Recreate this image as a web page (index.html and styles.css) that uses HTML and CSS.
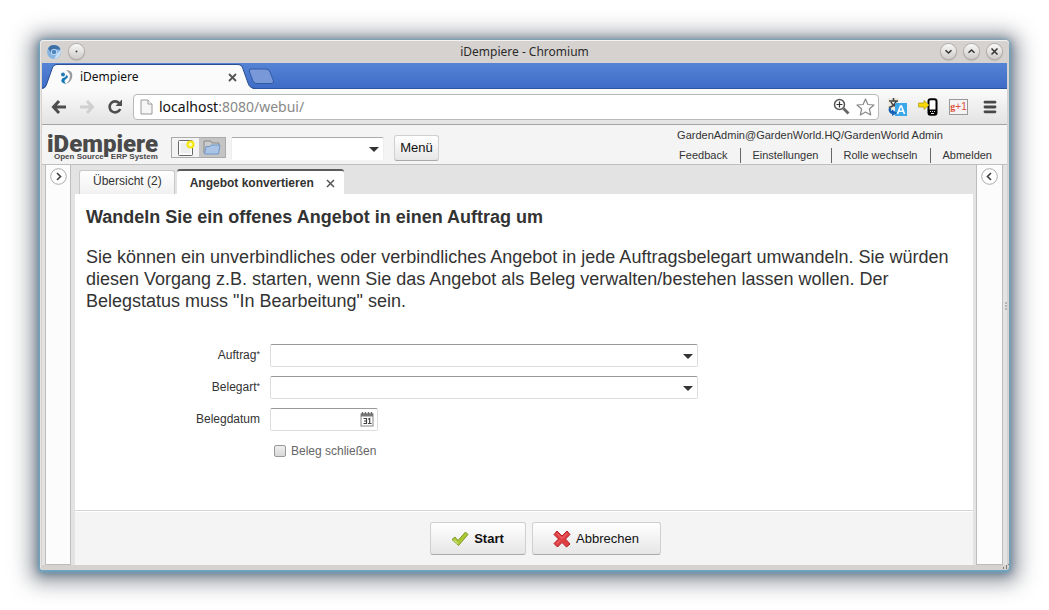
FILE: index.html
```html
<!DOCTYPE html>
<html lang="de">
<head>
<meta charset="utf-8">
<title>iDempiere</title>
<link rel="stylesheet" href="styles.css">
</head>
<body>
<div class="window">
  <div class="titlebar">
    <svg class="app-icon" width="14" height="14" viewBox="0 0 14 14"><circle cx="7" cy="7" r="7" fill="#86b4e2"/><path d="M1 3.500A7 7 0 0 1 13.500 4.500H7a3 3 0 0 0-3 3z" fill="#3e70a8"/><path d="M13.500 5A7 7 0 0 1 7 14l3-5.500z" fill="#c4def4"/><circle cx="7" cy="7" r="3" fill="#d4e6f7"/><circle cx="7" cy="7" r="2.300" fill="#4d86c0"/></svg>
    <button class="round" aria-label="Fenstermenü"><svg width="15" height="15" viewBox="0 0 15 15"><circle cx="7.500" cy="7.500" r="1" fill="#444"/></svg></button>
    <span class="window-title">iDempiere - Chromium</span>
    <button class="round" aria-label="Minimieren"><svg width="15" height="15" viewBox="0 0 15 15"><path d="M4.500 6.200l3 2.800 3-2.800" fill="none" stroke="#333" stroke-width="1.500"/></svg></button>
    <button class="round" aria-label="Maximieren"><svg width="15" height="15" viewBox="0 0 15 15"><path d="M4.500 8.800l3-2.800 3 2.800" fill="none" stroke="#333" stroke-width="1.500"/></svg></button>
    <button class="round" aria-label="Fenster schließen"><svg width="15" height="15" viewBox="0 0 15 15"><path d="M4.500 4.500l6 6M10.500 4.500l-6 6" stroke="#333" stroke-width="1.500"/></svg></button>
  </div>

  <div class="tabstrip">
    <div class="browser-tab">
      <svg class="tab-shape" width="214" height="26" viewBox="0 0 214 26"><path d="M0 26C3 25.500 4 24 5 21L10 6C11 3 12 2 15 2H196C199 2 200 3 201 6L206 20C207 23.500 209 25 212 26z" fill="#fbfbfb"/><path d="M0 25C3 24.500 4 23 5 20L10 6C11 3 12 1.500 15 1.500H196C199 1.500 200 3 201 6L206 20C207 23.500 209 25 213 25.500" fill="none" stroke="#2c4f93"/></svg>
      <svg class="favicon" width="14" height="16" viewBox="0 0 14 16"><path d="M6 1C12 1 13 5 12 9c-1 3-3 5-6 6 3-3 4-5 4-8S8 3 6 1z" fill="#9a9c9f"/><circle cx="3" cy="5.500" r="2" fill="#2479b5"/><path d="M6 6c3 1 2 3 0 4-2 1-2 3 0 5-5-1-6-4-3-6 2-1 3-1 3-3z" fill="#1677b6"/></svg>
      <span class="browser-tab-title">iDempiere</span>
      <button class="plain" aria-label="Tab schließen"><svg width="9" height="9" viewBox="0 0 9 9"><path d="M1 1l7 7M8 1L1 8" stroke="#555" stroke-width="1.800"/></svg></button>
    </div>
    <button class="plain new-tab" aria-label="Neuer Tab"><svg width="27" height="17" viewBox="0 0 27 17"><path d="M3 1H18Q21 1 22 4L25.500 13Q26 15.500 23 15.500H9Q6 15.500 5 13L1.500 4Q.5 1 3 1z" fill="#7898d8" stroke="#345ba8"/></svg></button>
  </div>

  <div class="toolbar">
    <button class="plain" aria-label="Zurück"><svg width="16" height="14" viewBox="0 0 16 14"><path d="M8 1L2.500 7 8 13M2.500 7H15" fill="none" stroke="#4d4d4d" stroke-width="3"/></svg></button>
    <button class="plain" aria-label="Vorwärts"><svg width="16" height="14" viewBox="0 0 16 14"><path d="M8 1l5.500 6L8 13M13.500 7H1" fill="none" stroke="#d0d0d0" stroke-width="3"/></svg></button>
    <button class="plain" aria-label="Neu laden"><svg width="16" height="16" viewBox="0 0 16 16"><path d="M12.500 4.500A5.500 5.500 0 1 0 13.200 10" fill="none" stroke="#4d4d4d" stroke-width="2.600"/><path d="M15 .5V7H8.500z" fill="#4d4d4d"/></svg></button>
    <div class="omnibox">
      <svg width="13" height="16" viewBox="0 0 13 16"><path d="M1 1H8L12 5V15H1z" fill="#f6f6f6" stroke="#999"/><path d="M8 1V5H12" fill="#fff" stroke="#999"/></svg>
      <span class="url" role="textbox" aria-label="Adresse"><b>localhost</b>:8080/webui/</span>
      <svg width="17" height="17" viewBox="0 0 17 17"><circle cx="6.500" cy="6.500" r="5" fill="#fff" stroke="#555" stroke-width="1.500"/><path d="M3.500 6.500h6M6.500 3.500v6" stroke="#333" stroke-width="1.200"/><path d="M10.500 10.500l5 5" stroke="#666" stroke-width="2.800"/></svg>
      <svg width="19" height="18" viewBox="0 0 19 18"><path d="M9.500 1l2.400 5.500 6.100.5-4.600 4 1.300 6-5.200-3.100L4.300 17l1.300-6L1 7l6.100-.5z" fill="#fff" stroke="#888" stroke-width="1.200" stroke-linejoin="round"/></svg>
    </div>
    <div class="extensions">
      <button class="plain" aria-label="Übersetzen"><svg width="19" height="18" viewBox="0 0 19 18"><path d="M0 0H11V11H0z" fill="#eeeade"/><path d="M1 3H10M5.500 0V3M8 3Q7 8 1 9.500M3 4Q5 8 10 9" fill="none" stroke="#444" stroke-width="1.600"/><rect x="7" y="5" width="12" height="13" fill="#3ba7e8"/><path d="M9.500 16l3-8h1l3 8M10.500 13.300h5" fill="none" stroke="#fff" stroke-width="1.600"/><path d="M2 10Q1 14 5 15" fill="none" stroke="#1763b5" stroke-width="2.500"/><path d="M4 11.500L9 15l-5 3z" fill="#1763b5"/></svg></button>
      <button class="plain" aria-label="An Telefon senden"><svg width="20" height="18" viewBox="0 0 20 18"><rect x="10.500" y="1.200" width="8" height="15.600" rx="2" fill="#fff" stroke="#000" stroke-width="2"/><path d="M10 11.500h9V16q0 1-1 1h-7q-1 0-1-1z"/><path d="M12 13.500h1M14 13.500h1M16 13.500h1M13 15.500h3" stroke="#ddd"/><path d="M.5 5H6V2.500L11 7 6 11.500V9H.5z" fill="#fbd900" stroke="#a99118" stroke-width=".7"/></svg></button>
      <button class="gplus" aria-label="Google plus"><span>g</span>+1</button>
      <button class="plain" aria-label="Menü"><svg width="14" height="14" viewBox="0 0 14 14"><path d="M2 2.200h10M2 7h10M2 11.800h10" stroke="#484848" stroke-width="2.800" stroke-linecap="round"/></svg></button>
    </div>
  </div>

  <header class="app-header">
    <div class="logo"><span class="logo-name">iDempiere</span><span class="logo-sub"><span>Open Source</span><span>ERP System</span></span></div>
    <div class="icon-buttons">
      <button aria-label="Neu"><svg width="18" height="18" viewBox="0 0 18 18"><rect x="1.500" y="1.500" width="14" height="15" rx="1" fill="#fff" stroke="#666"/><rect x="3.500" y="3.500" width="10" height="11" fill="#eee"/><circle cx="13.500" cy="5.500" r="3" fill="#fffcb0" stroke="#f6e70a" stroke-width="2"/></svg></button>
      <button class="pressed" aria-label="Öffnen"><svg width="20" height="17" viewBox="0 0 20 17"><path d="M2 14V2h7l1 2h7v4" fill="#ccc" stroke="#888"/><path d="M4 7.500h4l1-1.500h9l-1.500 9H2.500z" fill="#a9c4e6" stroke="#6f97c8"/></svg></button>
    </div>
    <div class="combo quick"><select aria-label="Suche"><option></option></select></div>
    <button class="btn menu-btn">Menü</button>
    <div class="user">
      <div class="user-name">GardenAdmin@GardenWorld.HQ/GardenWorld Admin</div>
      <nav class="links"><a href="#">Feedback</a><a href="#">Einstellungen</a><a href="#">Rolle wechseln</a><a href="#">Abmelden</a></nav>
    </div>
  </header>

  <div class="workbench">
    <aside class="side"><button class="toggle" aria-label="Ausklappen"><svg width="17" height="17" viewBox="0 0 17 17"><circle cx="8.500" cy="8.500" r="7.800" fill="#fff" stroke="#aaa"/><path d="M7 5l3.500 3.500L7 12" fill="none" stroke="#444" stroke-width="1.700"/></svg></button></aside>
    <main class="main">
      <div class="tabs">
        <button class="tab">Übersicht (2)</button>
        <div class="tab active"><span>Angebot konvertieren</span><button class="plain" aria-label="Schließen"><svg width="9" height="9" viewBox="0 0 9 9"><path d="M1 1l7 7M8 1L1 8" stroke="#555" stroke-width="1.500"/></svg></button></div>
      </div>
      <section class="content">
        <h1>Wandeln Sie ein offenes Angebot in einen Auftrag um</h1>
        <p>Sie können ein unverbindliches oder verbindliches Angebot in jede Auftragsbelegart umwandeln. Sie würden diesen Vorgang z.B. starten, wenn Sie das Angebot als Beleg verwalten/bestehen lassen wollen. Der Belegstatus muss "In Bearbeitung" sein.</p>
        <form class="form" id="process">
          <label for="order">Auftrag<span class="req">*</span></label>
          <div class="combo"><select id="order"><option></option></select></div>
          <label for="doctype">Belegart<span class="req">*</span></label>
          <div class="combo"><select id="doctype"><option></option></select></div>
          <label for="date">Belegdatum</label>
          <div class="date"><input id="date" type="text"><svg width="14" height="16" viewBox="0 0 14 16"><rect x="1" y="3" width="12" height="12" fill="#fff" stroke="#888"/><path d="M1 2.500h12v3H1z" fill="#777"/><path d="M2.500 3.500V1M5.500 3.500V1M8.500 3.500V1M11.500 3.500V1" stroke="#666" stroke-width="1.300"/><path d="M3.500 7.500h3v5h-3M4 10h2.500M8.200 8.300l1.500-.8v5M8 12.500h3.500" fill="none" stroke="#444" stroke-width="1.200"/></svg></div>
          <div class="check"><input id="close" type="checkbox"><label for="close">Beleg schließen</label></div>
        </form>
      </section>
      <footer class="actions">
        <button class="btn start" form="process" type="button"><svg width="18" height="16" viewBox="0 0 18 16"><path d="M1 8.500L4 6l3 3.500L14.500 1 17 3.500 7.500 14.500z" fill="#a9c832" stroke="#84982b" stroke-linejoin="round"/><path d="M3 9l4 4" stroke="#cbdc72" stroke-width="1.500"/></svg>Start</button>
        <button class="btn cancel" form="process" type="button"><svg width="18" height="18" viewBox="0 0 18 18"><path d="M4 1L9 6l5-5 3 3.500L12.500 9l4.500 5-3.500 3L9 12.500 4.500 17 1 13.500 5.500 9 1 4.500z" fill="#e04044" stroke="#b51f26" stroke-linejoin="round"/><path d="M4 3.500l5 5 5-5M4 13.500l3-3" fill="none" stroke="#f07478"/></svg>Abbrechen</button>
      </footer>
    </main>
    <aside class="side right"><button class="toggle" aria-label="Einklappen"><svg width="17" height="17" viewBox="0 0 17 17"><circle cx="8.500" cy="8.500" r="7.800" fill="#fff" stroke="#aaa"/><path d="M10 5L6.500 8.500 10 12" fill="none" stroke="#444" stroke-width="1.700"/></svg></button></aside>
    <svg class="grip" width="3" height="8" viewBox="0 0 3 8"><path d="M1 1h2M1 4h2M1 7h2" stroke="#888"/></svg>
  </div>
  <svg class="resize" width="7" height="6" viewBox="0 0 7 6"><path d="M1 4h1M4 4h1M4 2h1M6 0h1" stroke="#666" stroke-width="1.500"/></svg>
</div>
</body>
</html>
```

FILE: styles.css
```css
* { box-sizing: border-box; }
body {
  margin: 0;
  padding: 40px;
  background: #fff;
  color: #333;
  font-family: "Liberation Sans", Arial, sans-serif;
  font-size: 12px;
}
button, select, input { font: inherit; color: inherit; margin: 0; padding: 0; }
svg { display: block; flex: none; }
.plain { background: none; border: 0; flex: none; }

.window {
  position: relative;
  display: flex;
  flex-direction: column;
  min-height: calc(100vh - 80px);
  padding: 0 2px 5px;
  background: #d6d2cf;
  border-radius: 4px 4px 3px 3px;
  box-shadow: inset 0 1px #f4f4f4, inset 1px 0 #e9e6e4, 0 1px 3px 1px #6cabc9, 0 2px 10px 2px rgba(50, 85, 115, .6), 0 3px 20px 10px rgba(60, 68, 82, .5);
}
.titlebar {
  display: flex;
  align-items: center;
  gap: 8px;
  height: 23px;
  padding: 0 5px;
}
.round {
  width: 15px;
  height: 15px;
  flex: none;
  border: 0;
  border-radius: 50%;
  background: linear-gradient(#f8f8f8, #cfccca);
  box-shadow: 0 0 0 1px #b4b0ad, 0 1px 2px #888;
}
.window-title {
  flex: 1;
  padding-left: 24px;
  text-align: center;
  font: 12px/20px "Noto Sans", sans-serif;
  color: #2b2b2b;
}

.tabstrip {
  display: flex;
  align-items: flex-end;
  height: 26px;
  background: linear-gradient(#5584d6, #3f6cc6);
  border-bottom: 1px solid #2c559e;
}
.browser-tab {
  position: relative;
  display: flex;
  align-items: center;
  gap: 6px;
  width: 206px;
  height: 25px;
  padding: 3px 11px 0 18px;
}
.browser-tab > * { position: relative; }
.browser-tab .tab-shape { position: absolute; left: 0; top: 0; }
.browser-tab-title { flex: 1; font: 12px/20px "Noto Sans", sans-serif; color: #111; }
.new-tab { padding-bottom: 3px; }

.toolbar {
  display: flex;
  align-items: center;
  gap: 12px;
  height: 36px;
  padding: 0 10px 0 9px;
  background: linear-gradient(#fbfbfb, #e3e3e3);
  border-bottom: 1px solid #a5a5a5;
}
.omnibox {
  display: flex;
  flex: 1;
  align-items: center;
  gap: 6px;
  height: 26px;
  margin-left: -2px;
  padding: 0 3px 0 6px;
  background: #fff;
  border: 1px solid #b9b9b9;
  border-radius: 4px;
}
.url { flex: 1; font: 14px/20px "Noto Sans", sans-serif; color: #888; }
.url b { font-weight: 400; color: #111; }
.extensions { display: flex; align-items: center; gap: 11px; margin-left: -3px; }
.gplus {
  width: 19px;
  height: 16px;
  margin-right: 4px;
  border: 1px solid #999;
  background: #f4f4f4;
  color: #dd4b39;
  font-size: 10px;
  line-height: 12px;
  white-space: nowrap;
}
.gplus span { font-family: "Liberation Serif", serif; font-weight: 700; }

.app-header {
  display: flex;
  align-items: center;
  height: 40px;
  padding: 6px 15px 0 5px;
  background: #f4f4f4;
  border-bottom: 1px solid #bfbfbf;
}
.logo { width: 124px; height: 34px; color: #4a4a4a; }
.logo-name { display: block; font: 900 24px/26px Roboto, sans-serif; }
.logo-sub {
  display: flex;
  gap: 7px;
  margin-top: -4px;
  padding-left: 7px;
  font: 700 8px/8px "Liberation Sans", Arial, sans-serif;
  white-space: nowrap;
}
.icon-buttons { display: flex; border: 1px solid #aaa; }
.icon-buttons button {
  display: flex;
  align-items: center;
  justify-content: center;
  width: 27px;
  height: 19px;
  border: 0;
  background: #f4f4f4;
}
.icon-buttons .pressed { width: 26px; background: #c4c4c4; }

.combo { position: relative; }
.combo select, .date input {
  display: block;
  width: 100%;
  height: 23px;
  appearance: none;
  background: #fff;
  border: 1px solid #ddd;
  border-top-color: #999;
  border-radius: 2px;
}
.combo::after {
  content: "";
  position: absolute;
  right: 5px;
  top: 10px;
  border: solid transparent;
  border-width: 5px 5px 0;
  border-top-color: #333;
  pointer-events: none;
}
.quick { width: 153px; margin: 2px 10px 0 5px; }
.quick select { border-color: #aaa #eee #fff; }
.btn {
  display: flex;
  align-items: center;
  justify-content: center;
  background: linear-gradient(#fff, #e6e6e6);
  border: 1px solid #d0d0d0;
  border-bottom-color: #aaa;
  border-radius: 3px;
  color: #111;
  font-size: 13px;
}
.menu-btn { width: 45px; height: 26px; }
.user { margin: -6px 0 0 auto; font-size: 11px; }
.user-name { margin-left: -2px; line-height: 20px; white-space: nowrap; }
.links { display: flex; gap: 11px; line-height: 15px; padding: 3px 0 1px; }
.links a { color: inherit; text-decoration: none; white-space: nowrap; }
.links a + a { padding-left: 11px; border-left: 1px solid #666; }
.links a:not(:last-child) { padding-right: 2px; }

.workbench {
  position: relative;
  display: flex;
  flex: 1;
  padding: 0 4px 0 3px;
  background: #e3e3e3;
}
.side {
  width: 26px;
  flex: none;
  padding: 3px 4px;
  background: #fcfcfc;
  border: solid #bdbdbd;
  border-width: 0 1px 1px;
}
.toggle { display: block; border: 0; background: none; }
.right { width: 27px; }
.grip { position: absolute; right: 0; top: 137px; }
.resize { position: absolute; right: 0; bottom: 0; }
.main { display: flex; flex: 1; flex-direction: column; min-width: 0; margin: 0 3px 0 4px; }
.tabs { display: flex; align-items: flex-end; gap: 2px; height: 29px; padding: 0 4px; }
.tab {
  height: 24px;
  padding: 0 12px 3px 13px;
  border: 1px solid #c8c8c8;
  border-bottom: 0;
  border-radius: 3px 3px 0 0;
  background: linear-gradient(#fff, #f1f1f1);
}
.tab.active {
  display: flex;
  align-items: center;
  gap: 12px;
  height: 25px;
  padding: 1px 9px 0 13px;
  border-width: 0;
  border-top: 2px solid #5c5c5c;
  background: #fff;
  font-weight: 700;
}
.content { flex: 1; padding: 12px 20px 48px 11px; background: #fff; }
h1 { margin: 0 0 18px; font-size: 18px; line-height: 22px; }
.content p { margin: 0; font-size: 18px; line-height: 22px; }
.form {
  display: grid;
  grid-template-columns: 174px minmax(0, 428px);
  gap: 9px 10px;
  margin-top: 32px;
}
.form > label { height: 23px; text-align: right; line-height: 22px; }
.req { font-size: 9px; vertical-align: 2px; line-height: 9px; }
.date { position: relative; width: 108px; }
.date svg { position: absolute; right: 4px; top: 3px; }
.check { grid-column: 2; display: flex; align-items: center; gap: 5px; height: 22px; padding-left: 4px; color: #666; }
.check input {
  width: 12px;
  height: 12px;
  appearance: none;
  border: 1px solid #999;
  border-radius: 2px;
  background: linear-gradient(#eee, #d8d8d8);
}
.actions {
  display: flex;
  justify-content: center;
  gap: 6px;
  padding: 11px 0 10px 42px;
  background: #f4f4f4;
  border-top: 1px solid #d5d5d5;
  box-shadow: inset 0 1px #fff;
}
.actions .btn { height: 33px; }
.start { gap: 5px; width: 96px; font-weight: 700; }
.cancel { gap: 5px; width: 129px; }
```
